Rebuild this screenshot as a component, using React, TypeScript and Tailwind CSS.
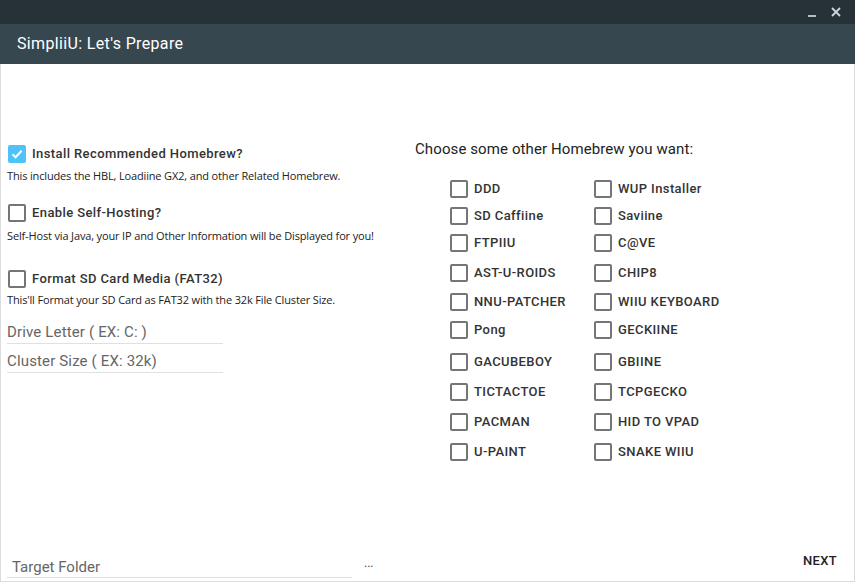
import React from "react";

const CheckBox = ({ checked = false }: { checked?: boolean }) =>
  checked ? (
    <div className="w-[18px] h-[18px] rounded-[2px] bg-[#4fc3f7] flex items-center justify-center shrink-0">
      <svg width="14" height="14" viewBox="0 0 14 14">
        <path d="M2.5 7.2 L5.6 10.2 L11.6 3.8" fill="none" stroke="white" strokeWidth="2" />
      </svg>
    </div>
  ) : (
    <div className="w-[18px] h-[18px] rounded-[2px] border-2 border-[#757575] shrink-0" />
  );

const rows: { a: string; b: string; mt: string }[] = [
  { a: "DDD", b: "WUP Installer", mt: "mt-[21px]" },
  { a: "SD Caffiine", b: "Saviine", mt: "mt-[9px]" },
  { a: "FTPIIU", b: "C@VE", mt: "mt-[9px]" },
  { a: "AST-U-ROIDS", b: "CHIP8", mt: "mt-[12px]" },
  { a: "NNU-PATCHER", b: "WIIU KEYBOARD", mt: "mt-[11px]" },
  { a: "Pong", b: "GECKIINE", mt: "mt-[10px]" },
  { a: "GACUBEBOY", b: "GBIINE", mt: "mt-[14px]" },
  { a: "TICTACTOE", b: "TCPGECKO", mt: "mt-[12px]" },
  { a: "PACMAN", b: "HID TO VPAD", mt: "mt-[12px]" },
  { a: "U-PAINT", b: "SNAKE WIIU", mt: "mt-[12px]" },
];

const label = "text-[13px] font-medium tracking-[0.4px] text-[#333] leading-[18px] whitespace-nowrap";
const sub = "font-['Open_Sans',sans-serif] text-[11px] leading-[14px] text-[#222] whitespace-nowrap tracking-[-0.15px]";

export default function App() {
  return (
    <div className="w-[855px] h-[582px] flex flex-col bg-white font-['Roboto',sans-serif] overflow-hidden">
      <div className="h-[24px] bg-[#263238] flex items-center justify-end shrink-0">
        <svg width="10" height="10" viewBox="0 0 10 10" className="mr-[14px] mt-[4px]">
          <rect x="1" y="6" width="8" height="2" fill="#b0bec5" />
        </svg>
        <svg width="10" height="10" viewBox="0 0 10 10" className="mr-[14px]">
          <path d="M1 1 L9 9 M9 1 L1 9" stroke="#cfd8dc" strokeWidth="1.8" />
        </svg>
      </div>
      <div className="h-[40px] bg-[#37474f] flex items-center pl-[17px] shrink-0">
        <span className="text-white text-[16px] leading-[20px] tracking-[0.35px]">SimpliiU: Let's Prepare</span>
      </div>
      <div className="flex-1 flex flex-col border-x border-b border-[#dcdcdc]">
        <div className="flex-1 flex">
          <div className="w-[414px] pl-[6px] pt-[81px] flex flex-col">
            <div className="flex items-center h-[18px] pl-[1px] gap-[6px]">
              <CheckBox checked />
              <span className={label}>Install Recommended Homebrew?</span>
            </div>
            <div className={sub + " mt-[6px]"}>This includes the HBL, Loadiine GX2, and other Related Homebrew.</div>
            <div className="flex items-center h-[18px] pl-[1px] gap-[6px] mt-[21px]">
              <CheckBox />
              <span className={label}>Enable Self-Hosting?</span>
            </div>
            <div className={sub + " mt-[7px]"}>Self-Host via Java, your IP and Other Information will be Displayed for you!</div>
            <div className="flex items-center h-[18px] pl-[1px] gap-[6px] mt-[27px]">
              <CheckBox />
              <span className={label}>Format SD Card Media (FAT32)</span>
            </div>
            <div className={sub + " mt-[5px]"}>This'll Format your SD Card as FAT32 with the 32k File Cluster Size.</div>
            <div className="w-[216px] h-[24px] mt-[13px] pt-[2px] flex items-center border-b border-[#e0e0e0] text-[15px] text-[#666] tracking-[0.15px]">
              Drive Letter ( EX: C: )
            </div>
            <div className="w-[216px] h-[24px] mt-[5px] pt-[2px] flex items-center border-b border-[#e0e0e0] text-[15px] text-[#666] tracking-[0.15px]">
              Cluster Size ( EX: 32k)
            </div>
          </div>
          <div className="flex-1 pt-[75px] flex flex-col">
            <div className="text-[15px] leading-[20px] text-[#222] tracking-[0.1px]">Choose some other Homebrew you want:</div>
            {rows.map((r) => (
              <div key={r.a} className={"flex h-[18px] pl-[35px] " + r.mt}>
                <div className="w-[144px] flex items-center gap-[6px]">
                  <CheckBox />
                  <span className={label}>{r.a}</span>
                </div>
                <div className="flex items-center gap-[6px]">
                  <CheckBox />
                  <span className={label}>{r.b}</span>
                </div>
              </div>
            ))}
          </div>
        </div>
        <div className="flex items-end pb-[3px] pr-[1px]">
          <div className="ml-[6px] w-[345px] h-[24px] pl-[5px] pt-[3px] flex items-center border-b border-[#e0e0e0] text-[15px] text-[#666]">
            Target Folder
          </div>
          <div className="ml-[12px] mb-[9px] text-[12px] leading-[12px] text-[#444]">...</div>
          <div className="ml-auto h-[35px] px-[16px] flex items-center text-[13px] font-medium text-[#222] tracking-[0.3px]">NEXT</div>
        </div>
      </div>
    </div>
  );
}
